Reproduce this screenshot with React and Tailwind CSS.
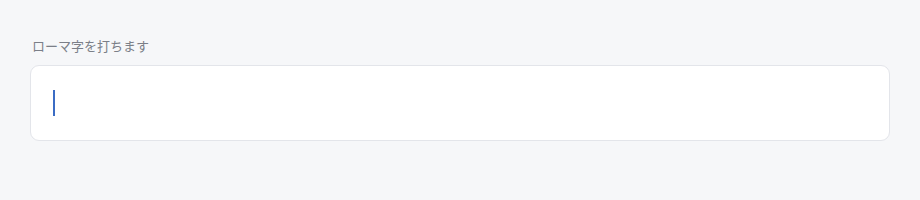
export default function App() {
  return (
    <div className="h-[200px] w-[920px] bg-[#f6f7f9] px-[30px] pt-[37px]" style={{ fontFamily: '"Noto Sans CJK JP", "Noto Sans", sans-serif' }}>
      <label className="block pl-[2px] text-[13px] leading-[18px] text-[#7b7f88]">ローマ字を打ちます</label>
      <div className="mt-[10px] flex h-[76px] items-center rounded-[9px] border border-[#e3e5ea] bg-white pl-[22px]">
        <span className="block h-[26px] w-[2px] bg-[#3b6cc4]" />
      </div>
    </div>
  )
}
